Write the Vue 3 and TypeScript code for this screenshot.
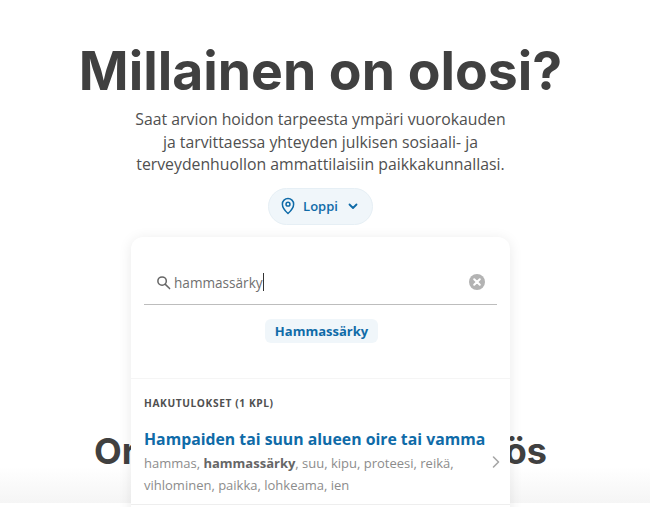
<template>
  <main class="page">
    <section class="hero">
      <h1 class="title">Millainen on olosi?</h1>
      <p class="lead">
        Saat arvion hoidon tarpeesta ympäri vuorokauden<br />
        ja tarvittaessa yhteyden julkisen sosiaali- ja<br />
        terveydenhuollon ammattilaisiin paikkakunnallasi.
      </p>
      <button class="location" type="button">
        <svg class="pin" viewBox="0 0 24 24" fill="none" stroke="currentColor" stroke-width="2">
          <path d="M12 22s7.5-7 7.5-12.5a7.5 7.5 0 0 0-15 0C4.500 15 12 22 12 22z" stroke-linejoin="round" />
          <circle cx="12" cy="9.500" r="2.600" />
        </svg>
        <span>{{ place }}</span>
        <svg class="chevron" viewBox="0 0 12 12" fill="none" stroke="currentColor" stroke-width="1.800">
          <path d="M2.500 4.500 6 8l3.500-3.500" stroke-linecap="round" stroke-linejoin="round" />
        </svg>
      </button>
    </section>

    <div class="search-anchor">
      <div class="search-card">
        <div class="search-top">
          <div class="search-field">
            <svg class="search-icon" viewBox="0 0 16 16" fill="none" stroke="currentColor" stroke-width="1.600">
              <circle cx="6.500" cy="6.500" r="4.500" />
              <path d="m10 10 4.500 4.500" stroke-linecap="round" />
            </svg>
            <span class="query">{{ query }}</span><span class="caret"></span>
            <svg class="clear" viewBox="0 0 16 16">
              <circle cx="8" cy="8" r="8" fill="#b3b3b3" />
              <path d="m5.200 5.200 5.600 5.600m0-5.600-5.600 5.600" stroke="#fff" stroke-width="2" stroke-linecap="round" />
            </svg>
          </div>
          <div class="suggest"><span class="chip">Hammassärky</span></div>
        </div>
        <div class="results">
          <h2 class="results-title">Hakutulokset (1 kpl)</h2>
          <a class="result" href="#">
            <div class="result-body">
              <div class="result-name">Hampaiden tai suun alueen oire tai vamma</div>
              <p class="result-tags">
                hammas, <b>hammassärky</b>, suu, kipu, proteesi, reikä,<br />
                vihlominen, paikka, lohkeama, ien
              </p>
            </div>
            <svg class="result-arrow" viewBox="0 0 10 14" fill="none" stroke="currentColor" stroke-width="1.600">
              <path d="m2.500 2 5 5-5 5" stroke-linecap="round" stroke-linejoin="round" />
            </svg>
          </a>
        </div>
      </div>
    </div>

    <h2 class="next-title"><span>Or</span><span>ös</span></h2>
    <div class="fade"></div>
  </main>
</template>

<script setup lang="ts">
const place: string = 'Loppi'
const query: string = 'hammassärky'
</script>

<style>
html,
body {
  margin: 0;
  background: #fff;
  overflow: hidden;
}
</style>

<style scoped>
.page {
  position: relative;
  height: 507px;
  overflow: hidden;
  font-family: "Open Sans", "Liberation Sans", sans-serif;
  color: #404040;
}

.hero {
  display: flex;
  flex-direction: column;
  align-items: center;
  width: 641px;
  padding-top: 36px;
}

.title {
  margin: 0;
  font-family: Inter, "Liberation Sans", sans-serif;
  font-size: 53.500px;
  font-weight: 700;
  line-height: 70px;
  color: #404040;
  white-space: nowrap;
}

.lead {
  margin: 2px 0 0;
  font-size: 15.800px;
  line-height: 22.500px;
  text-align: center;
  color: #505050;
}

.location {
  display: flex;
  align-items: center;
  height: 37px;
  margin-top: 12px;
  padding: 0 13px 0 10px;
  border: 1px solid #e6eff5;
  border-radius: 19px;
  background: #f0f6fa;
  color: #0f6ba8;
  font: 600 13px "Open Sans", sans-serif;
}

.pin {
  width: 18px;
  height: 18px;
  margin-right: 6px;
}

.chevron {
  width: 12px;
  height: 12px;
  margin-left: 9px;
}

.search-anchor {
  position: relative;
  height: 0;
  margin-top: 12px;
  z-index: 2;
}

.search-card {
  position: absolute;
  top: 0;
  left: 131px;
  width: 379px;
  padding-bottom: 30px;
  border-radius: 12px 12px 0 0;
  background: #fff;
  box-shadow: 0 2px 14px rgba(0, 0, 0, 0.09);
}

.search-top {
  height: 142px;
  padding: 0 13px;
  box-sizing: border-box;
  border-bottom: 1px solid #f5f5f5;
}

.search-field {
  display: flex;
  align-items: center;
  height: 68px;
  padding: 24px 12px 0;
  box-sizing: border-box;
  border-bottom: 1px solid #bdbdbd;
  font-size: 13.600px;
  color: #707070;
}

.search-icon {
  flex: none;
  width: 15px;
  height: 15px;
  margin-right: 3px;
  color: #666;
}

.caret {
  width: 1px;
  height: 18px;
  background: #333;
}

.clear {
  width: 16px;
  height: 16px;
  margin-left: auto;
}

.suggest {
  display: flex;
  justify-content: center;
  margin: 14px 0 0 2px;
}

.chip {
  padding: 3px 10px;
  border-radius: 6px;
  background: #f0f6fa;
  color: #0f6ba8;
  font-size: 13px;
  font-weight: 700;
  line-height: 18px;
}

.results {
  padding: 17px 13px 0;
  border-bottom: 1px solid #eee;
}

.results-title {
  margin: 0;
  font-size: 10.200px;
  font-weight: 700;
  line-height: 14px;
  letter-spacing: 0.6px;
  text-transform: uppercase;
  color: #505050;
}

.result {
  display: flex;
  align-items: center;
  margin-top: 18px;
  padding-bottom: 8px;
  color: inherit;
  text-decoration: none;
}

.result-body {
  flex: 1;
  min-width: 0;
}

.result-name {
  font-size: 15.800px;
  font-weight: 700;
  line-height: 22px;
  white-space: nowrap;
  color: #0f6ba8;
}

.result-tags {
  margin: 2px 0 0;
  font-size: 13px;
  line-height: 22px;
  color: #8c8c8c;
}

.result-tags b {
  color: #666;
}

.result-arrow {
  flex: none;
  width: 10px;
  height: 14px;
  margin-right: -4px;
  color: #a6a6a6;
}

.next-title {
  display: flex;
  justify-content: space-between;
  width: 453px;
  margin: 204px auto 0 94px;
  font-family: Inter, "Liberation Sans", sans-serif;
  font-size: 36px;
  font-weight: 700;
  line-height: 44px;
  color: #404040;
}

.fade {
  position: absolute;
  left: 0;
  right: 0;
  bottom: 4px;
  height: 36px;
  background: linear-gradient(to bottom, rgba(245, 245, 245, 0), #f5f5f5);
}
</style>
